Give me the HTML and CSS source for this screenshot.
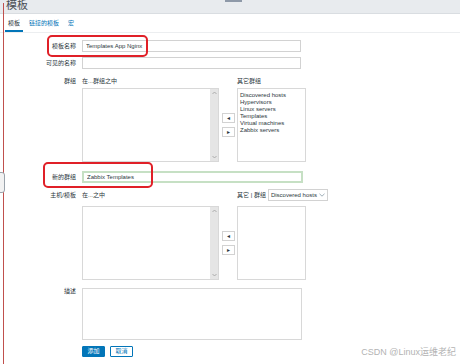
FILE: index.html
```html
<!DOCTYPE html>
<html lang="zh">
<head>
    <meta charset="UTF-8">
    <title>模板</title>
    <link rel="stylesheet" href="styles.css">
</head>
<body>

    <div class="page">
        <!-- Capçalera -->
        <div class="topbar">
            <h1 class="title">模板</h1>
            <span class="topbar-knob"></span>
        </div>

        <!-- Pestanyes -->
        <div class="tabs">
            <span class="tab active">模板</span>
            <span class="tab">链接的模板</span>
            <span class="tab">宏</span>
        </div>

        <form class="form">
            <div class="row row-name">
                <label>模板名称</label>
                <input type="text" class="field" value="Templates App Nginx">
            </div>

            <div class="row row-visible">
                <label>可见的名称</label>
                <input type="text" class="field">
            </div>

            <div class="row row-head row-groups">
                <label>群组</label>
                <div class="heads">
                    <span class="head-left">在...群组之中</span>
                    <span>其它群组</span>
                </div>
            </div>
            <div class="row row-list">
                <span></span>
                <div class="dual">
                    <div class="list list-left">
                        <div class="scroll">
                            <svg width="5" height="4" viewBox="0 0 5 4"><path d="M0.5 3 L2.5 1 L4.5 3" fill="none" stroke="#a0a0a0" stroke-width="0.8"/></svg>
                            <svg width="5" height="4" viewBox="0 0 5 4"><path d="M0.5 1 L2.5 3 L4.5 1" fill="none" stroke="#a0a0a0" stroke-width="0.8"/></svg>
                        </div>
                    </div>
                    <div class="moves">
                        <button type="button" class="move">&#9666;</button>
                        <button type="button" class="move">&#9656;</button>
                    </div>
                    <div class="list list-right">
                        <div>Discovered hosts</div>
                        <div>Hypervisors</div>
                        <div>Linux servers</div>
                        <div>Templates</div>
                        <div>Virtual machines</div>
                        <div>Zabbix servers</div>
                    </div>
                </div>
            </div>

            <div class="row row-newgroup">
                <label>新的群组</label>
                <input type="text" class="field field-green" value="Zabbix Templates">
            </div>

            <div class="row row-head row-hosts">
                <label>主机/模板</label>
                <div class="heads">
                    <span class="head-left">在...之中</span>
                    <span>其它 | 群组</span>
                    <span class="select">Discovered hosts
                        <svg width="6" height="4" viewBox="0 0 6 4"><path d="M0.5 0.8 L3 3.2 L5.5 0.8" fill="none" stroke="#768d99" stroke-width="0.7"/></svg>
                    </span>
                </div>
            </div>
            <div class="row row-list row-list2">
                <span></span>
                <div class="dual">
                    <div class="list list-left">
                        <div class="scroll">
                            <svg width="5" height="4" viewBox="0 0 5 4"><path d="M0.5 3 L2.5 1 L4.5 3" fill="none" stroke="#a0a0a0" stroke-width="0.8"/></svg>
                            <svg width="5" height="4" viewBox="0 0 5 4"><path d="M0.5 1 L2.5 3 L4.5 1" fill="none" stroke="#a0a0a0" stroke-width="0.8"/></svg>
                        </div>
                    </div>
                    <div class="moves">
                        <button type="button" class="move">&#9666;</button>
                        <button type="button" class="move">&#9656;</button>
                    </div>
                    <div class="list list-right"></div>
                </div>
            </div>

            <div class="row row-desc">
                <label>描述</label>
                <textarea class="desc"></textarea>
            </div>

            <div class="row row-buttons">
                <span></span>
                <div class="buttons">
                    <button type="submit" class="btn btn-add">添加</button>
                    <button type="button" class="btn btn-cancel">取消</button>
                </div>
            </div>
        </form>

        <!-- Marques vermelles i decoració -->
        <div class="edge-line"></div>
        <div class="edge-handle"></div>
        <div class="mark mark-name"></div>
        <div class="mark mark-group"></div>
        <div class="watermark">CSDN @Linux运维老纪</div>
    </div>

</body>
</html>
```

FILE: styles.css
```css
body {
    margin: 0;
    background-color: #ffffff;
    font-family: "Liberation Sans", "Noto Sans CJK SC", sans-serif;
    font-size: 6px;
    line-height: 7px;
    color: #2b3840;
}
.page {
    position: relative;
    width: 460px;
    height: 364px;
    overflow: hidden;
}
.topbar {
    position: relative;
    height: 13px;
    background-color: #e8ebee;
    border-bottom: 1px solid #d9dde1;
}
.title {
    margin: 0;
    padding-left: 6px;
    font-size: 11px;
    font-weight: normal;
    line-height: 11px;
    color: #4a4f55;
}
.topbar-knob {
    position: absolute;
    left: 225px;
    top: 0;
    width: 17px;
    height: 2px;
    background-color: #8e99a8;
}
.tabs {
    display: flex;
    gap: 3px;
    height: 18px;
    padding-left: 5px;
    border-bottom: 1px solid #eceef0;
}
.tab {
    padding: 0 3px;
    line-height: 18px;
    color: #0275b8;
}
.tab.active {
    color: #2b3840;
    border-bottom: 2px solid #0275b8;
    height: 16px;
}
.form {
    margin: 0;
}
.row {
    display: grid;
    grid-template-columns: 76px 1fr;
    column-gap: 6px;
    align-items: center;
}
.row label {
    text-align: right;
}
.row-name { margin-top: 7px; }
.row-visible { margin-top: 5px; }
.row-groups { margin-top: 9px; }
.row-list { margin-top: 3px; }
.row-newgroup { margin-top: 9px; }
.row-hosts { margin-top: 6px; }
.row-list2 { margin-top: 5px; }
.row-desc { margin-top: 8px; align-items: start; }
.row-buttons { margin-top: 6px; }

.field {
    box-sizing: border-box;
    width: 219px;
    height: 12px;
    margin: 0;
    padding: 0 3px;
    border: 1px solid #d2d2d2;
    font-family: inherit;
    font-size: 6px;
    color: #2b3840;
    outline: none;
}
.field-green {
    width: 221px;
    border: 2px solid #c6e0c4;
}
.heads {
    display: flex;
    align-items: center;
    height: 12px;
}
.row-groups .heads {
    height: 7px;
}
.head-left {
    width: 155px;
}
.select {
    display: inline-flex;
    align-items: center;
    gap: 2px;
    box-sizing: border-box;
    height: 12px;
    margin-left: 2px;
    padding: 0 2px;
    border: 1px solid #d2d2d2;
}
.dual {
    display: flex;
    align-items: center;
}
.list {
    box-sizing: border-box;
    height: 74px;
    border: 1px solid #d8d8d8;
    background-color: #ffffff;
}
.list-left {
    display: flex;
    justify-content: flex-end;
    width: 137px;
}
.scroll {
    display: flex;
    flex-direction: column;
    justify-content: space-between;
    align-items: center;
    width: 8px;
    padding: 2px 0;
    background-color: #e5e5e5;
}
.moves {
    display: flex;
    flex-direction: column;
    align-items: center;
    gap: 4px;
    width: 18px;
}
.move {
    box-sizing: border-box;
    width: 13px;
    height: 10px;
    padding: 0;
    border: 1px solid #d2d2d2;
    background-color: #ffffff;
    font-size: 6px;
    line-height: 8px;
    color: #2b3840;
}
.list-right {
    width: 69px;
    padding: 3px 2px;
    line-height: 7px;
}
.desc {
    box-sizing: border-box;
    width: 220px;
    height: 52px;
    margin: 0;
    border: 1px solid #d8d8d8;
    resize: none;
}
.buttons {
    display: flex;
    gap: 5px;
}
.btn {
    box-sizing: border-box;
    width: 23px;
    height: 11px;
    padding: 0;
    font-family: inherit;
    font-size: 6px;
    line-height: 9px;
    border-radius: 1px;
}
.btn-add {
    border: 1px solid #0275b8;
    background-color: #0275b8;
    color: #ffffff;
}
.btn-cancel {
    border: 1px solid #0275b8;
    background-color: #ffffff;
    color: #0275b8;
}
.edge-line {
    position: absolute;
    left: 3px;
    top: 3px;
    width: 1px;
    height: 361px;
    background-color: #c0504d;
}
.edge-handle {
    position: absolute;
    left: -3px;
    top: 172px;
    width: 6px;
    height: 19px;
    border: 1px solid #9aa3ab;
    border-radius: 3px;
    background-color: #f2f2f2;
}
.mark {
    position: absolute;
    border: 2px solid #e02028;
    border-radius: 5px;
}
.mark-name {
    left: 47px;
    top: 35px;
    width: 97px;
    height: 18px;
}
.mark-group {
    left: 43px;
    top: 162px;
    width: 106px;
    height: 22px;
}
.watermark {
    position: absolute;
    right: 4px;
    bottom: 7px;
    font-size: 9px;
    line-height: 10px;
    color: #b3b3b3;
}
```
